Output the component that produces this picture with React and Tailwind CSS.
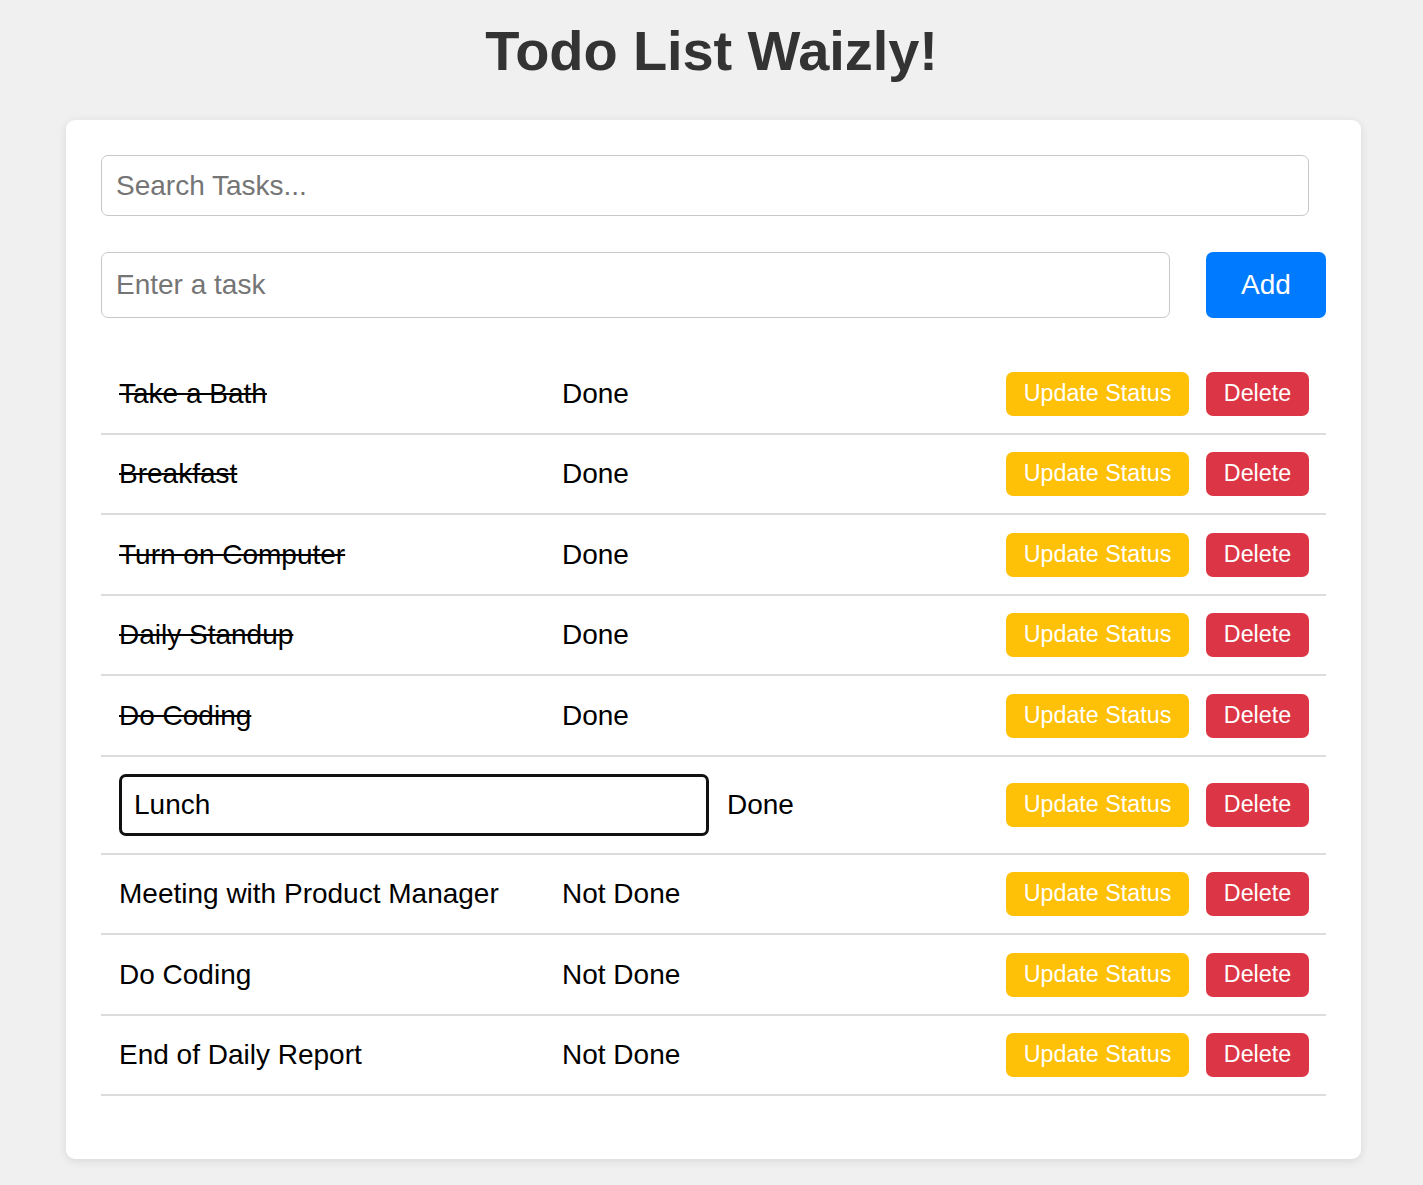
import React from "react";

const tasks = [
  { name: "Take a Bath", status: "Done", done: true, h: "h-[81px]" },
  { name: "Breakfast", status: "Done", done: true, h: "h-[80px]" },
  { name: "Turn on Computer", status: "Done", done: true, h: "h-[81px]" },
  { name: "Daily Standup", status: "Done", done: true, h: "h-[80px]" },
  { name: "Do Coding", status: "Done", done: true, h: "h-[81px]" },
  { name: "Lunch", status: "Done", done: true, editing: true, h: "h-[98px]" },
  { name: "Meeting with Product Manager", status: "Not Done", h: "h-[80px]" },
  { name: "Do Coding", status: "Not Done", h: "h-[81px]" },
  { name: "End of Daily Report", status: "Not Done", h: "h-[80px]" },
];

function Row({ t }) {
  return (
    <li className={`flex items-center justify-between ${t.h} pl-[18px] pr-[17px] border-b-2 border-[#dcdcdc]`}>
      <div className="flex items-center">
        {t.editing ? (
          <input
            defaultValue={t.name}
            className="w-[590px] h-[62px] border-[3px] border-[#111] rounded-[7px] pl-[12px] text-[28px] text-black outline-none"
          />
        ) : (
          <span className={`w-[425px] text-[28px] text-black ${t.done ? "line-through" : ""}`}>{t.name}</span>
        )}
        <span className="ml-[18px] text-[28px] text-black">{t.status}</span>
      </div>
      <div className="flex items-center gap-[17px]">
        <button className="w-[183px] h-[44px] rounded-[7px] bg-[#ffc107] text-white text-[23.3px] leading-none">
          Update Status
        </button>
        <button className="w-[103px] h-[44px] rounded-[7px] bg-[#dc3545] text-white text-[23.3px] leading-none">
          Delete
        </button>
      </div>
    </li>
  );
}

export default function App() {
  return (
    <div className="min-h-[1185px] bg-[#f0f0f0] pb-[26px]" style={{ fontFamily: '"Liberation Sans", Arial, sans-serif' }}>
      <h1 className="pt-[19px] mb-[37px] text-center text-[56px] leading-[64px] font-bold text-[#333] tracking-[-0.1px]">Todo List Waizly!</h1>
      <div className="ml-[66px] w-[1295px] bg-white rounded-[9px] shadow-[0_2px_10px_rgba(0,0,0,0.1)] px-[35px] pt-[35px] pb-[63px]">
        <input
          placeholder="Search Tasks..."
          className="block w-[1208px] h-[61px] border border-[#c8c8c8] rounded-[7px] pl-[14px] text-[28px] placeholder:text-[#757575] outline-none"
        />
        <div className="flex items-center gap-[36px] mt-[36px]">
          <input
            placeholder="Enter a task"
            className="w-[1069px] h-[66px] border border-[#c8c8c8] rounded-[7px] pl-[14px] text-[28px] placeholder:text-[#757575] outline-none"
          />
          <button className="w-[120px] h-[66px] rounded-[7px] bg-[#007bff] text-white text-[28px]">Add</button>
        </div>
        <ul className="mt-[36px]">
          {tasks.map((t, i) => (
            <Row key={i} t={t} />
          ))}
        </ul>
      </div>
    </div>
  );
}
